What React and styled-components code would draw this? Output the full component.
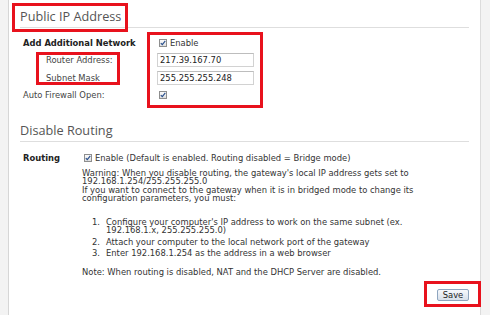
import React from 'react';
import styled, { createGlobalStyle } from 'styled-components';

const GlobalStyle = createGlobalStyle`
  html, body {
    margin: 0;
    padding: 0;
    background: #fff;
  }
  body {
    font-family: "DejaVu Sans", Verdana, sans-serif;
    font-size: 8.4px;
    color: #333;
  }
`;

const Page = styled.div`
  display: flex;
  width: 490px;
  height: 315px;
  overflow: hidden;
`;

const LeftGutter = styled.div`
  flex: none;
  width: 8px;
  background: #f3f3f3;
  border-right: 1px solid #d6d6d6;
`;

const RightGutter = styled.div`
  flex: none;
  width: 9px;
  background: #f3f3f3;
  border-left: 1px solid #dcdcdc;
`;

const Content = styled.div`
  flex: 1;
  padding: 0 11px;
  display: flex;
  flex-direction: column;
`;

const SectionHead = styled.div`
  margin-top: ${p => p.$gap}px;
  padding-bottom: 3px;
  border-bottom: 1px solid #dedede;
`;

const SectionTitle = styled.h2`
  margin: 0;
  font-family: "Open Sans", "DejaVu Sans", sans-serif;
  font-weight: 400;
  font-size: 12.7px;
  line-height: 16px;
  color: #555;
`;

// red annotation frame drawn over the content
const Highlight = styled.div`
  position: relative;
  width: ${p => (p.$w ? `${p.$w}px` : 'auto')};
  &::after {
    content: '';
    position: absolute;
    top: ${p => p.$t}px;
    right: ${p => p.$r}px;
    bottom: ${p => p.$b}px;
    left: ${p => p.$l}px;
    border: 3px solid #e8121d;
    pointer-events: none;
  }
`;

const TitleMark = styled(Highlight)`
  display: inline-block;
  align-self: flex-start;
  margin-top: 8px;
`;

const Form = styled.div`
  display: flex;
  margin-top: 6px;
  padding-left: 3px;
`;

const LabelColumn = styled.div`
  width: 134px;
  display: flex;
  flex-direction: column;
`;

const ControlColumn = styled(Highlight)`
  width: 97px;
  display: flex;
  flex-direction: column;
`;

const Row = styled.div`
  height: 17.5px;
  display: flex;
  align-items: center;
  font-weight: ${p => (p.$bold ? 700 : 400)};
  color: ${p => (p.$bold ? '#222' : '#444')};
  white-space: nowrap;
`;

const LabelGroup = styled(Highlight)`
  margin-left: 23px;
`;

const CheckLine = styled.label`
  display: flex;
  align-items: center;
  gap: 3px;
  padding-left: 2px;
  color: #333;
`;

const Box = styled.span`
  flex: none;
  width: 8px;
  height: 8px;
  box-sizing: border-box;
  border: 1px solid #8e8e8e;
  background: linear-gradient(#fbfbfb, #dedede);
  display: flex;
  align-items: center;
  justify-content: center;
`;

const Input = styled.input`
  box-sizing: border-box;
  width: 97px;
  height: 14px;
  margin: 0;
  padding: 0 2px;
  border: 1px solid #d2d2d2;
  border-top-color: #bdbdbd;
  font-family: "DejaVu Sans", Verdana, sans-serif;
  font-size: 8.4px;
  color: #222;
  background: #fff;
`;

const Routing = styled.div`
  display: grid;
  grid-template-columns: 62px 1fr;
  padding-top: 11px;
`;

const RoutingLabel = styled.div`
  padding-left: 3px;
  line-height: 10px;
  font-weight: 700;
  color: #222;
`;

const Detail = styled.div`
  display: flex;
  flex-direction: column;
`;

const Text = styled.p`
  margin: ${p => p.$top || 0}px 0 0;
  line-height: 8.3px;
  white-space: nowrap;
  color: #333;
`;

const Steps = styled.ol`
  margin: 16px 0 0;
  padding: 0 0 0 10px;
  list-style: none;
  display: flex;
  flex-direction: column;
  gap: 2.8px;
`;

const Step = styled.li`
  display: grid;
  grid-template-columns: 14px 1fr;
  line-height: 8.3px;
  white-space: nowrap;
`;

const Actions = styled.div`
  display: flex;
  justify-content: flex-end;
  margin-top: 13px;
`;

const SaveMark = styled(Highlight)``;

const Button = styled.button`
  box-sizing: border-box;
  width: 32px;
  height: 12px;
  margin: 0;
  padding: 0;
  border: 1px solid #8ea5bf;
  border-radius: 2px;
  background: linear-gradient(#f7f9fc, #d7e0ea);
  font-family: "DejaVu Sans", Verdana, sans-serif;
  font-size: 8.4px;
  line-height: 10px;
  color: #222;
`;

const Check = ({ label }) => (
  <CheckLine>
    <Box>
      <svg width="6" height="6" viewBox="0 0 6 6">
        <path d="M0.8 3.1 L2.3 4.7 L5.3 0.9" fill="none" stroke="#264d8c" strokeWidth="1.1" />
      </svg>
    </Box>
    {label && <span>{label}</span>}
  </CheckLine>
);

const App = () => (
  <>
    <GlobalStyle />
    <Page>
      <LeftGutter />
      <Content>
        <SectionHead $gap={0}>
          <TitleMark $t={-5} $r={-7} $b={-8} $l={-8}>
            <SectionTitle>Public IP Address</SectionTitle>
          </TitleMark>
        </SectionHead>

        <Form>
          <LabelColumn>
            <Row $bold>Add Additional Network</Row>
            <LabelGroup $w={74} $t={0.5} $r={0} $b={1.5} $l={-10}>
              <Row>Router Address:</Row>
              <Row>Subnet Mask</Row>
            </LabelGroup>
            <Row>Auto Firewall Open:</Row>
          </LabelColumn>
          <ControlColumn $t={-2} $r={-9} $b={-4} $l={-10}>
            <Row><Check label="Enable" /></Row>
            <Row><Input defaultValue="217.39.167.70" /></Row>
            <Row><Input defaultValue="255.255.255.248" /></Row>
            <Row><Check /></Row>
          </ControlColumn>
        </Form>

        <SectionHead $gap={18}>
          <SectionTitle>Disable Routing</SectionTitle>
        </SectionHead>

        <Routing>
          <RoutingLabel>Routing</RoutingLabel>
          <Detail>
            <Check label="Enable (Default is enabled. Routing disabled = Bridge mode)" />
            <Text $top={6}>
              Warning: When you disable routing, the gateway's local IP address gets set to<br />
              192.168.1.254/255.255.255.0<br />
              If you want to connect to the gateway when it is in bridged mode to change its<br />
              configuration parameters, you must:
            </Text>
            <Steps>
              <Step>
                <span>1.</span>
                <span>
                  Configure your computer's IP address to work on the same subnet (ex.<br />
                  192.168.1.x, 255.255.255.0)
                </span>
              </Step>
              <Step>
                <span>2.</span>
                <span>Attach your computer to the local network port of the gateway</span>
              </Step>
              <Step>
                <span>3.</span>
                <span>Enter 192.168.1.254 as the address in a web browser</span>
              </Step>
            </Steps>
            <Text $top={10.7}>
              Note: When routing is disabled, NAT and the DHCP Server are disabled.
            </Text>
          </Detail>
        </Routing>

        <Actions>
          <SaveMark $t={-8} $r={-12} $b={-6} $l={-13}>
            <Button>Save</Button>
          </SaveMark>
        </Actions>
      </Content>
      <RightGutter />
    </Page>
  </>
);

export default App;
